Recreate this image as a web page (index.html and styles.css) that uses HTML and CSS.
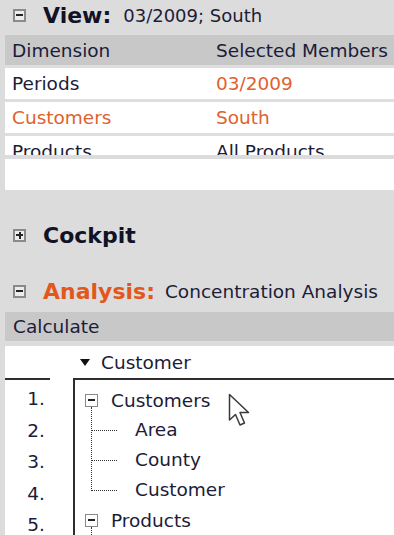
FILE: index.html
```html
<!DOCTYPE html>
<html>
<head>
<meta charset="utf-8">
<link rel="stylesheet" href="styles.css">
</head>
<body>
<div class="page">
  <section class="panel">
    <h2 class="title"><span class="toggle minus"></span><span class="t-main">View:</span><span class="t-sub">03/2009; South</span></h2>
    <div class="table">
      <div class="row head"><span class="c1">Dimension</span><span class="c2">Selected Members</span></div>
      <div class="row"><span class="c1">Periods</span><span class="c2 hl">03/2009</span></div>
      <div class="row"><span class="c1 hl">Customers</span><span class="c2 hl">South</span></div>
      <div class="clipwrap"><div class="row"><span class="c1">Products</span><span class="c2">All Products</span></div></div>
    </div>
    <div class="blank"></div>
  </section>

  <h2 class="title cockpit"><span class="toggle plus"></span><span class="t-main">Cockpit</span></h2>

  <section class="panel">
    <h2 class="title analysis"><span class="toggle minus"></span><span class="t-main orange">Analysis:</span><span class="t-sub">Concentration Analysis</span></h2>
    <div class="bar">Calculate</div>
    <div class="body">
      <div class="colhead"><span class="tri"></span>Customer</div>
      <div class="grid">
        <ol class="nums">
          <li>1.</li><li>2.</li><li>3.</li><li>4.</li><li>5.</li>
        </ol>
        <div class="tree">
          <div class="node"><span class="tbox"></span>Customers</div>
          <ul class="kids">
            <li class="first">Area</li>
            <li>County</li>
            <li>Customer</li>
          </ul>
          <div class="node more"><span class="tbox"></span>Products</div>
        </div>
      </div>
      <svg class="cursor" width="24" height="36" viewBox="0 0 24 36"><path d="M1.5 1.5 L1.5 27 L7.5 21.5 L12 32 L16.5 30 L12 19.5 L20.5 19.5 Z" fill="#fff" stroke="#3a3a3a" stroke-width="1.5" stroke-linejoin="round"/></svg>
    </div>
  </section>
</div>
</body>
</html>
```

FILE: styles.css
```css
* { box-sizing: border-box; }
html, body { margin: 0; padding: 0; }
body {
  background: #dcdcdc;
  font-family: "DejaVu Sans", sans-serif;
  color: #1c1c38;
  width: 394px;
  height: 535px;
  overflow: hidden;
}
.page { padding-left: 5px; }
.title {
  margin: 0;
  height: 30px;
  display: flex;
  align-items: center;
  font-weight: normal;
  padding-left: 8px;
  white-space: nowrap;
}
.toggle {
  width: 13px; height: 13px;
  border: 2px solid #8a8a8a;
  background: #ececec;
  position: relative;
  flex: none;
  margin-right: 17px;
  display: flex; align-items: center; justify-content: center;
}
.toggle::before { content: ""; width: 7px; height: 2px; background: #222; }
.toggle.plus::after { content: ""; position: absolute; width: 2px; height: 7px; background: #222; left: 3.5px; top: 1.5px; }
.t-main { font-weight: bold; font-size: 22px; color: #121226; }
.t-main.orange { color: #e2581c; }
.t-sub { font-size: 18px; margin-left: 12px; }
.analysis .t-sub { font-size: 18.5px; margin-left: 10px; }
.table { margin-top: 5px; display: flex; flex-direction: column; gap: 3px; background: #dedede; }
.row { display: flex; height: 31px; align-items: center; background: #fff; font-size: 18.5px; overflow: hidden; white-space: nowrap; flex: none; }
.row.head { background: #c8c8c8; height: 30px; }
.clipwrap { height: 19px; overflow: hidden; background: #fff; }
.c1 { width: 211px; padding-left: 7px; }
.hl { color: #e0622e; }
.blank { margin-top: 4px; height: 31px; background: #fff; }
.cockpit { margin-top: 30px; }
.analysis { margin-top: 28px; height: 26px; }
.bar { margin-top: 8px; height: 29px; background: #c8c8c8; font-size: 18.5px; display: flex; align-items: center; padding-left: 8px; }
.body { margin-top: 5px; background: #fff; height: 200px; position: relative; }
.colhead { height: 32px; padding-left: 75px; display: flex; align-items: center; font-size: 18.5px; }
.tri { width: 0; height: 0; border-left: 5px solid transparent; border-right: 5px solid transparent; border-top: 7px solid #111; margin-right: 11px; }
.grid { display: flex; gap: 23px; }
.nums { list-style: none; margin: 0; padding: 3px 5px 0 0; width: 45px; border-top: 2px solid #2e2e2e; font-size: 18.5px; text-align: right; flex: none; }
.nums li { height: 31.5px; line-height: 31.5px; }
.tree { flex: 1; border-left: 2px solid #2e2e2e; border-top: 2px solid #2e2e2e; padding: 5px 0 0 10px; font-size: 18.5px; }
.node { height: 30px; display: flex; align-items: center; }
.tbox { width: 13px; height: 13px; border: 1px solid #888; background: #fff; display: flex; align-items: center; justify-content: center; margin-right: 13px; flex: none; }
.tbox::before { content: ""; width: 7px; height: 1.5px; background: #222; }
.kids { list-style: none; margin: 0; padding: 0 0 0 50px; }
.kids li { height: 30px; line-height: 30px; position: relative; }
.kids li::before {
  content: ""; position: absolute; left: -44px; top: -15px; width: 25px; height: 30px;
  border-left: 1px dotted #333; border-bottom: 1px dotted #333;
}
.kids li.first::before { top: -8px; height: 23px; }
.node.more { position: relative; }
.node.more::after { content: ""; position: absolute; left: 6px; top: 22px; height: 10px; border-left: 1px dotted #333; }
.cursor { position: absolute; left: 223px; top: 47px; }
```
